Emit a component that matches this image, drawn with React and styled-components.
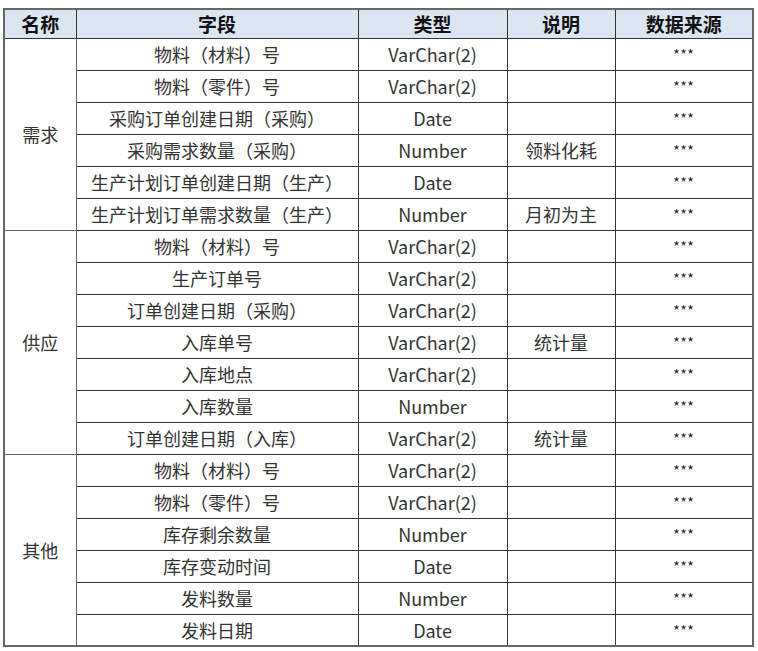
import React from 'react';
import styled, { createGlobalStyle } from 'styled-components';

const GlobalStyle = createGlobalStyle`
    body {
        margin: 0;
        background: #ffffff;
        font-family: "Noto Sans CJK SC", "Noto Sans", sans-serif;
    }
`;

const Page = styled.div`
    padding: 8px 0 0 3px;
`;

const Table = styled.table`
    width: 749px;
    border-collapse: collapse;
    table-layout: fixed;
    border: 2px solid #666;
    font-size: 18px;
    color: #333;
`;

const HeadRow = styled.tr`
    height: 29px;
`;

const Row = styled.tr`
    height: 32px;
`;

const HeadCell = styled.th`
    padding: 0;
    background: #dce6f2;
    border: 1px solid #333;
    font-weight: bold;
    font-size: 19px;
    color: #111;
    text-align: center;
    line-height: 1;
`;

const Cell = styled.td`
    padding: 0;
    border: 1px solid #333;
    text-align: center;
    line-height: 1;
    white-space: nowrap;
`;

const GroupCell = styled(Cell)`
    border-color: #666;
`;

const Stars = styled(Cell)`
    font-size: 14px;
    vertical-align: top;
    padding-top: 8px;
    letter-spacing: 0.5px;
    color: #222;
`;

const groups = [
    {
        name: '需求',
        rows: [
            ['物料（材料）号', 'VarChar(2)', ''],
            ['物料（零件）号', 'VarChar(2)', ''],
            ['采购订单创建日期（采购）', 'Date', ''],
            ['采购需求数量（采购）', 'Number', '领料化耗'],
            ['生产计划订单创建日期（生产）', 'Date', ''],
            ['生产计划订单需求数量（生产）', 'Number', '月初为主'],
        ],
    },
    {
        name: '供应',
        rows: [
            ['物料（材料）号', 'VarChar(2)', ''],
            ['生产订单号', 'VarChar(2)', ''],
            ['订单创建日期（采购）', 'VarChar(2)', ''],
            ['入库单号', 'VarChar(2)', '统计量'],
            ['入库地点', 'VarChar(2)', ''],
            ['入库数量', 'Number', ''],
            ['订单创建日期（入库）', 'VarChar(2)', '统计量'],
        ],
    },
    {
        name: '其他',
        rows: [
            ['物料（材料）号', 'VarChar(2)', ''],
            ['物料（零件）号', 'VarChar(2)', ''],
            ['库存剩余数量', 'Number', ''],
            ['库存变动时间', 'Date', ''],
            ['发料数量', 'Number', ''],
            ['发料日期', 'Date', ''],
        ],
    },
];

const App = () => (
    <Page>
        <GlobalStyle />
        <Table>
            <colgroup>
                <col style={{ width: 72 }} />
                <col style={{ width: 282 }} />
                <col style={{ width: 149 }} />
                <col style={{ width: 108 }} />
                <col style={{ width: 138 }} />
            </colgroup>
            <thead>
                <HeadRow>
                    <HeadCell>名称</HeadCell>
                    <HeadCell>字段</HeadCell>
                    <HeadCell>类型</HeadCell>
                    <HeadCell>说明</HeadCell>
                    <HeadCell>数据来源</HeadCell>
                </HeadRow>
            </thead>
            <tbody>
                {groups.map(group =>
                    group.rows.map(([field, type, note], i) => (
                        <Row key={group.name + i}>
                            {i === 0 && (
                                <GroupCell rowSpan={group.rows.length}>{group.name}</GroupCell>
                            )}
                            <Cell>{field}</Cell>
                            <Cell>{type}</Cell>
                            <Cell>{note}</Cell>
                            <Stars>***</Stars>
                        </Row>
                    ))
                )}
            </tbody>
        </Table>
    </Page>
);

export default App;
